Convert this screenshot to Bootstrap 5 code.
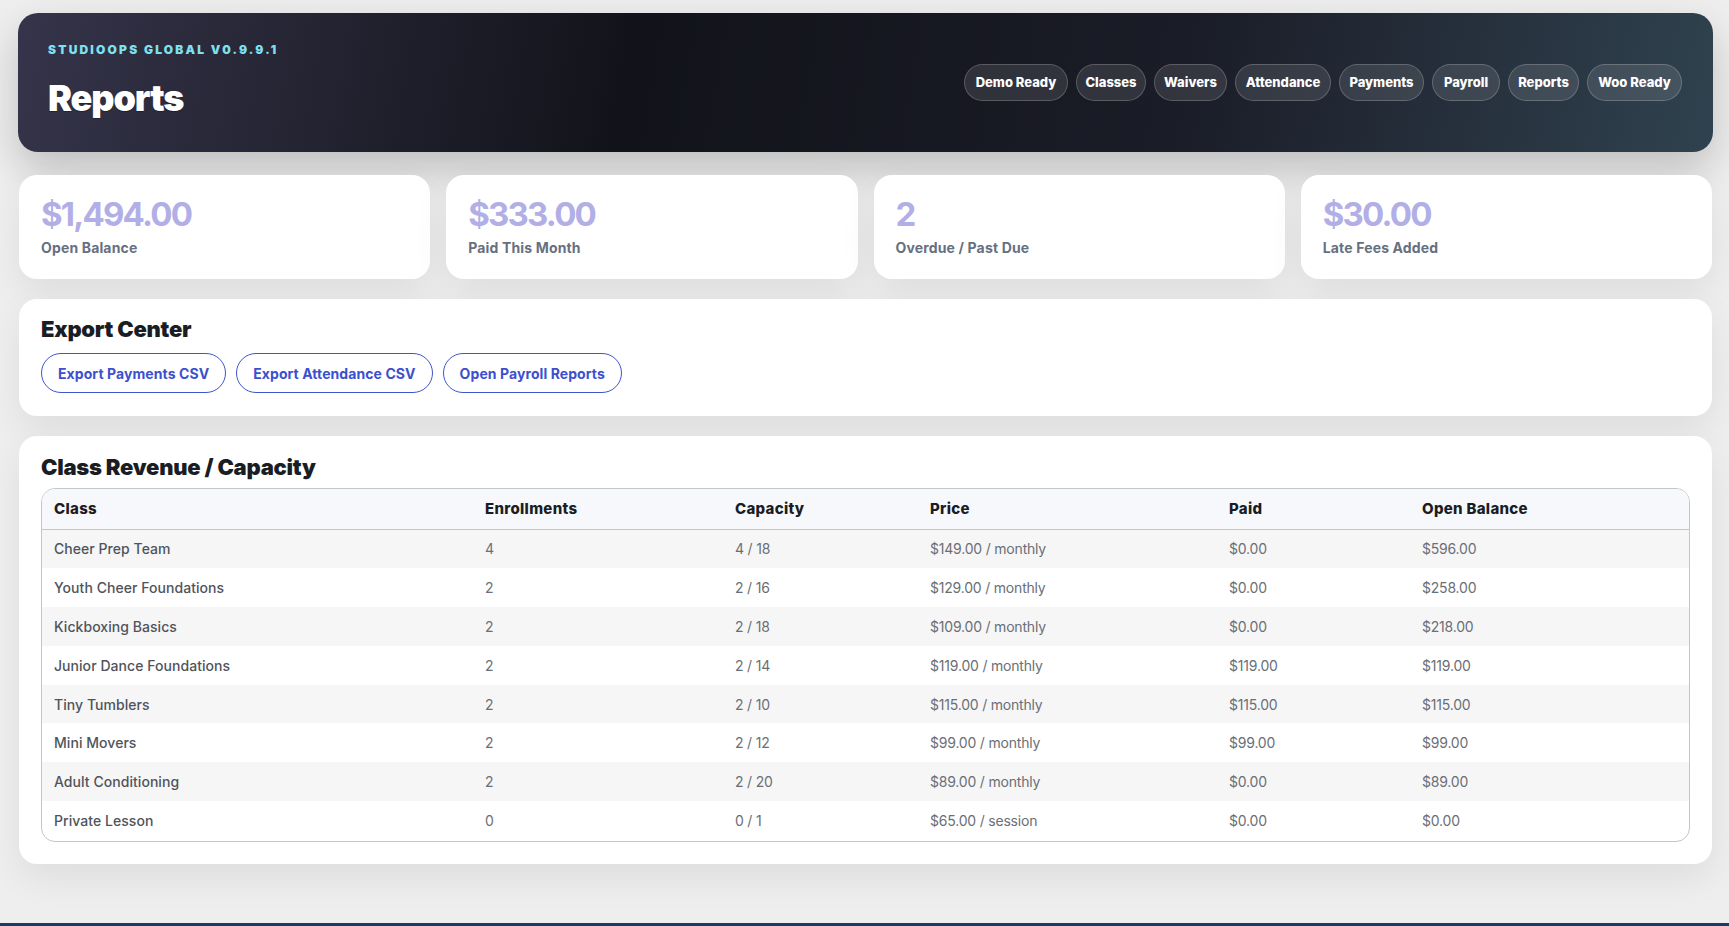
<!doctype html>
<html lang="en">
<head>
<meta charset="utf-8">
<title>Reports</title>
<link href="https://cdn.jsdelivr.net/npm/bootstrap@5.3.0/dist/css/bootstrap.min.css" rel="stylesheet">
<style>
html,body{height:100%}
body{font-family:Inter,"Liberation Sans",sans-serif;background:#eeeeee;min-height:926px;overflow:hidden;display:flex;flex-direction:column}
.ops-wrap{flex:1 1 auto;padding:13px 16px 0 18px}
.ops-hero{height:139px;border-radius:20px;padding:0 31px 0 30px;background:linear-gradient(100deg,#35344a 0%,#12131a 36%,#1a1c27 68%,#30424f 100%);box-shadow:0 18px 42px rgba(0,0,0,.2)}
.ops-kicker{font-size:12px;font-weight:900;letter-spacing:2.2px;color:#7fe0f0;text-transform:uppercase;margin-bottom:19px;line-height:16px;margin-top:-5px}
.ops-title{font-size:36px;font-weight:900;color:#fff;letter-spacing:-1.1px;line-height:42px;margin:0;text-shadow:0 1px 1px rgba(0,0,0,.3)}
.ops-chip{height:37px;display:flex;align-items:center;justify-content:center;border-radius:999px;color:#fff;font-size:13px;font-weight:800;background:rgba(255,255,255,.11);border:1px solid rgba(255,255,255,.2);white-space:nowrap}
.ops-chip:nth-child(1){width:104px}
.ops-chip:nth-child(2){width:70px}
.ops-chip:nth-child(3){width:73px}
.ops-chip:nth-child(4){width:96px}
.ops-chip:nth-child(5){width:85px}
.ops-chip:nth-child(6){width:68px}
.ops-chip:nth-child(7){width:71px}
.ops-chip:nth-child(8){width:95px}
.ops-stats{margin:23px 1px 20px}
.ops-stat{border:0;border-radius:18px;height:104px;padding:18px 22px;box-shadow:0 14px 36px rgba(0,0,0,.07)}
.ops-value{font-size:33px;font-weight:700;letter-spacing:-1.8px;line-height:42px;color:#b2aee6}
.ops-label{font-size:14px;font-weight:700;color:#667080;line-height:20px;margin-top:3px;letter-spacing:.15px}
.ops-panel{border:0;border-radius:18px;margin:0 1px 20px;padding:0 22px;box-shadow:0 14px 36px rgba(0,0,0,.07)}
.ops-export{height:117px;padding-top:17px}
.ops-data{height:428px;padding-top:18px;margin-bottom:0}
.ops-heading{font-size:22px;font-weight:900;color:#1a1d24;line-height:26px;letter-spacing:-.25px;margin:0}
.ops-btnrow{gap:10px;margin-top:11px}
.ops-btn{height:40px;display:flex;align-items:center;padding:0 16px;font-size:14px;font-weight:700;letter-spacing:.08px;color:#3c50cf;border:1px solid #3f55c9;border-radius:999px;background:#fff}
.ops-tablebox{margin-top:8px;height:354px;border:1px solid #c4c6ca;border-radius:14px;overflow:hidden}
.ops-table{table-layout:fixed;width:100%;margin:0;font-size:14px;--bs-table-striped-bg:#f6f6f7;--bs-table-striped-color:#6a6f76;--bs-table-color:#6a6f76;color:#6a6f76}
.ops-table th{background:#f7f8fc;color:#1a1d24;font-size:15px;letter-spacing:.3px;font-weight:800;height:40px;padding:0 12px;vertical-align:middle;border-bottom:1px solid #c4c6ca}
.ops-table td{height:38.9px;padding:0 12px;vertical-align:middle;border:0;font-weight:400;letter-spacing:-.2px}
.ops-table>tbody>tr>td:first-child{font-weight:500;color:#4f545b;letter-spacing:.05px}
.ops-table>tbody{border-top:0}
.ops-footbar{height:3px;flex:0 0 3px;background:#123f66}
</style>
</head>
<body>
<div class="ops-wrap">
  <header class="ops-hero d-flex align-items-center justify-content-between">
    <div>
      <div class="ops-kicker">StudioOps Global v0.9.9.1</div>
      <h1 class="ops-title">Reports</h1>
    </div>
    <nav class="d-flex gap-2">
      <a class="ops-chip text-decoration-none" href="#">Demo Ready</a>
      <a class="ops-chip text-decoration-none" href="#">Classes</a>
      <a class="ops-chip text-decoration-none" href="#">Waivers</a>
      <a class="ops-chip text-decoration-none" href="#">Attendance</a>
      <a class="ops-chip text-decoration-none" href="#">Payments</a>
      <a class="ops-chip text-decoration-none" href="#">Payroll</a>
      <a class="ops-chip text-decoration-none" href="#">Reports</a>
      <a class="ops-chip text-decoration-none" href="#">Woo Ready</a>
    </nav>
  </header>

  <div class="ops-stats d-grid gap-3 position-relative" style="grid-template-columns:repeat(4,1fr)">
    <div class="card ops-stat"><div class="ops-value">$1,494.00</div><div class="ops-label">Open Balance</div></div>
    <div class="card ops-stat"><div class="ops-value">$333.00</div><div class="ops-label">Paid This Month</div></div>
    <div class="card ops-stat"><div class="ops-value">2</div><div class="ops-label">Overdue / Past Due</div></div>
    <div class="card ops-stat"><div class="ops-value">$30.00</div><div class="ops-label">Late Fees Added</div></div>
  </div>

  <section class="card ops-panel ops-export">
    <h2 class="ops-heading">Export Center</h2>
    <div class="d-flex ops-btnrow">
      <a class="ops-btn text-decoration-none" href="#">Export Payments CSV</a>
      <a class="ops-btn text-decoration-none" href="#">Export Attendance CSV</a>
      <a class="ops-btn text-decoration-none" href="#">Open Payroll Reports</a>
    </div>
  </section>

  <section class="card ops-panel ops-data">
    <h2 class="ops-heading">Class Revenue / Capacity</h2>
    <div class="ops-tablebox">
      <table class="table table-striped ops-table">
        <colgroup>
          <col style="width:431px"><col style="width:250px"><col style="width:195px"><col style="width:299px"><col style="width:193px"><col>
        </colgroup>
        <thead><tr><th>Class</th><th>Enrollments</th><th>Capacity</th><th>Price</th><th>Paid</th><th>Open Balance</th></tr></thead>
        <tbody>
          <tr><td>Cheer Prep Team</td><td>4</td><td>4 / 18</td><td>$149.00 / monthly</td><td>$0.00</td><td>$596.00</td></tr>
          <tr><td>Youth Cheer Foundations</td><td>2</td><td>2 / 16</td><td>$129.00 / monthly</td><td>$0.00</td><td>$258.00</td></tr>
          <tr><td>Kickboxing Basics</td><td>2</td><td>2 / 18</td><td>$109.00 / monthly</td><td>$0.00</td><td>$218.00</td></tr>
          <tr><td>Junior Dance Foundations</td><td>2</td><td>2 / 14</td><td>$119.00 / monthly</td><td>$119.00</td><td>$119.00</td></tr>
          <tr><td>Tiny Tumblers</td><td>2</td><td>2 / 10</td><td>$115.00 / monthly</td><td>$115.00</td><td>$115.00</td></tr>
          <tr><td>Mini Movers</td><td>2</td><td>2 / 12</td><td>$99.00 / monthly</td><td>$99.00</td><td>$99.00</td></tr>
          <tr><td>Adult Conditioning</td><td>2</td><td>2 / 20</td><td>$89.00 / monthly</td><td>$0.00</td><td>$89.00</td></tr>
          <tr><td>Private Lesson</td><td>0</td><td>0 / 1</td><td>$65.00 / session</td><td>$0.00</td><td>$0.00</td></tr>
        </tbody>
      </table>
    </div>
  </section>
</div>
<div class="ops-footbar"></div>
<script src="https://cdn.jsdelivr.net/npm/bootstrap@5.3.0/dist/js/bootstrap.bundle.min.js"></script>
</body>
</html>
